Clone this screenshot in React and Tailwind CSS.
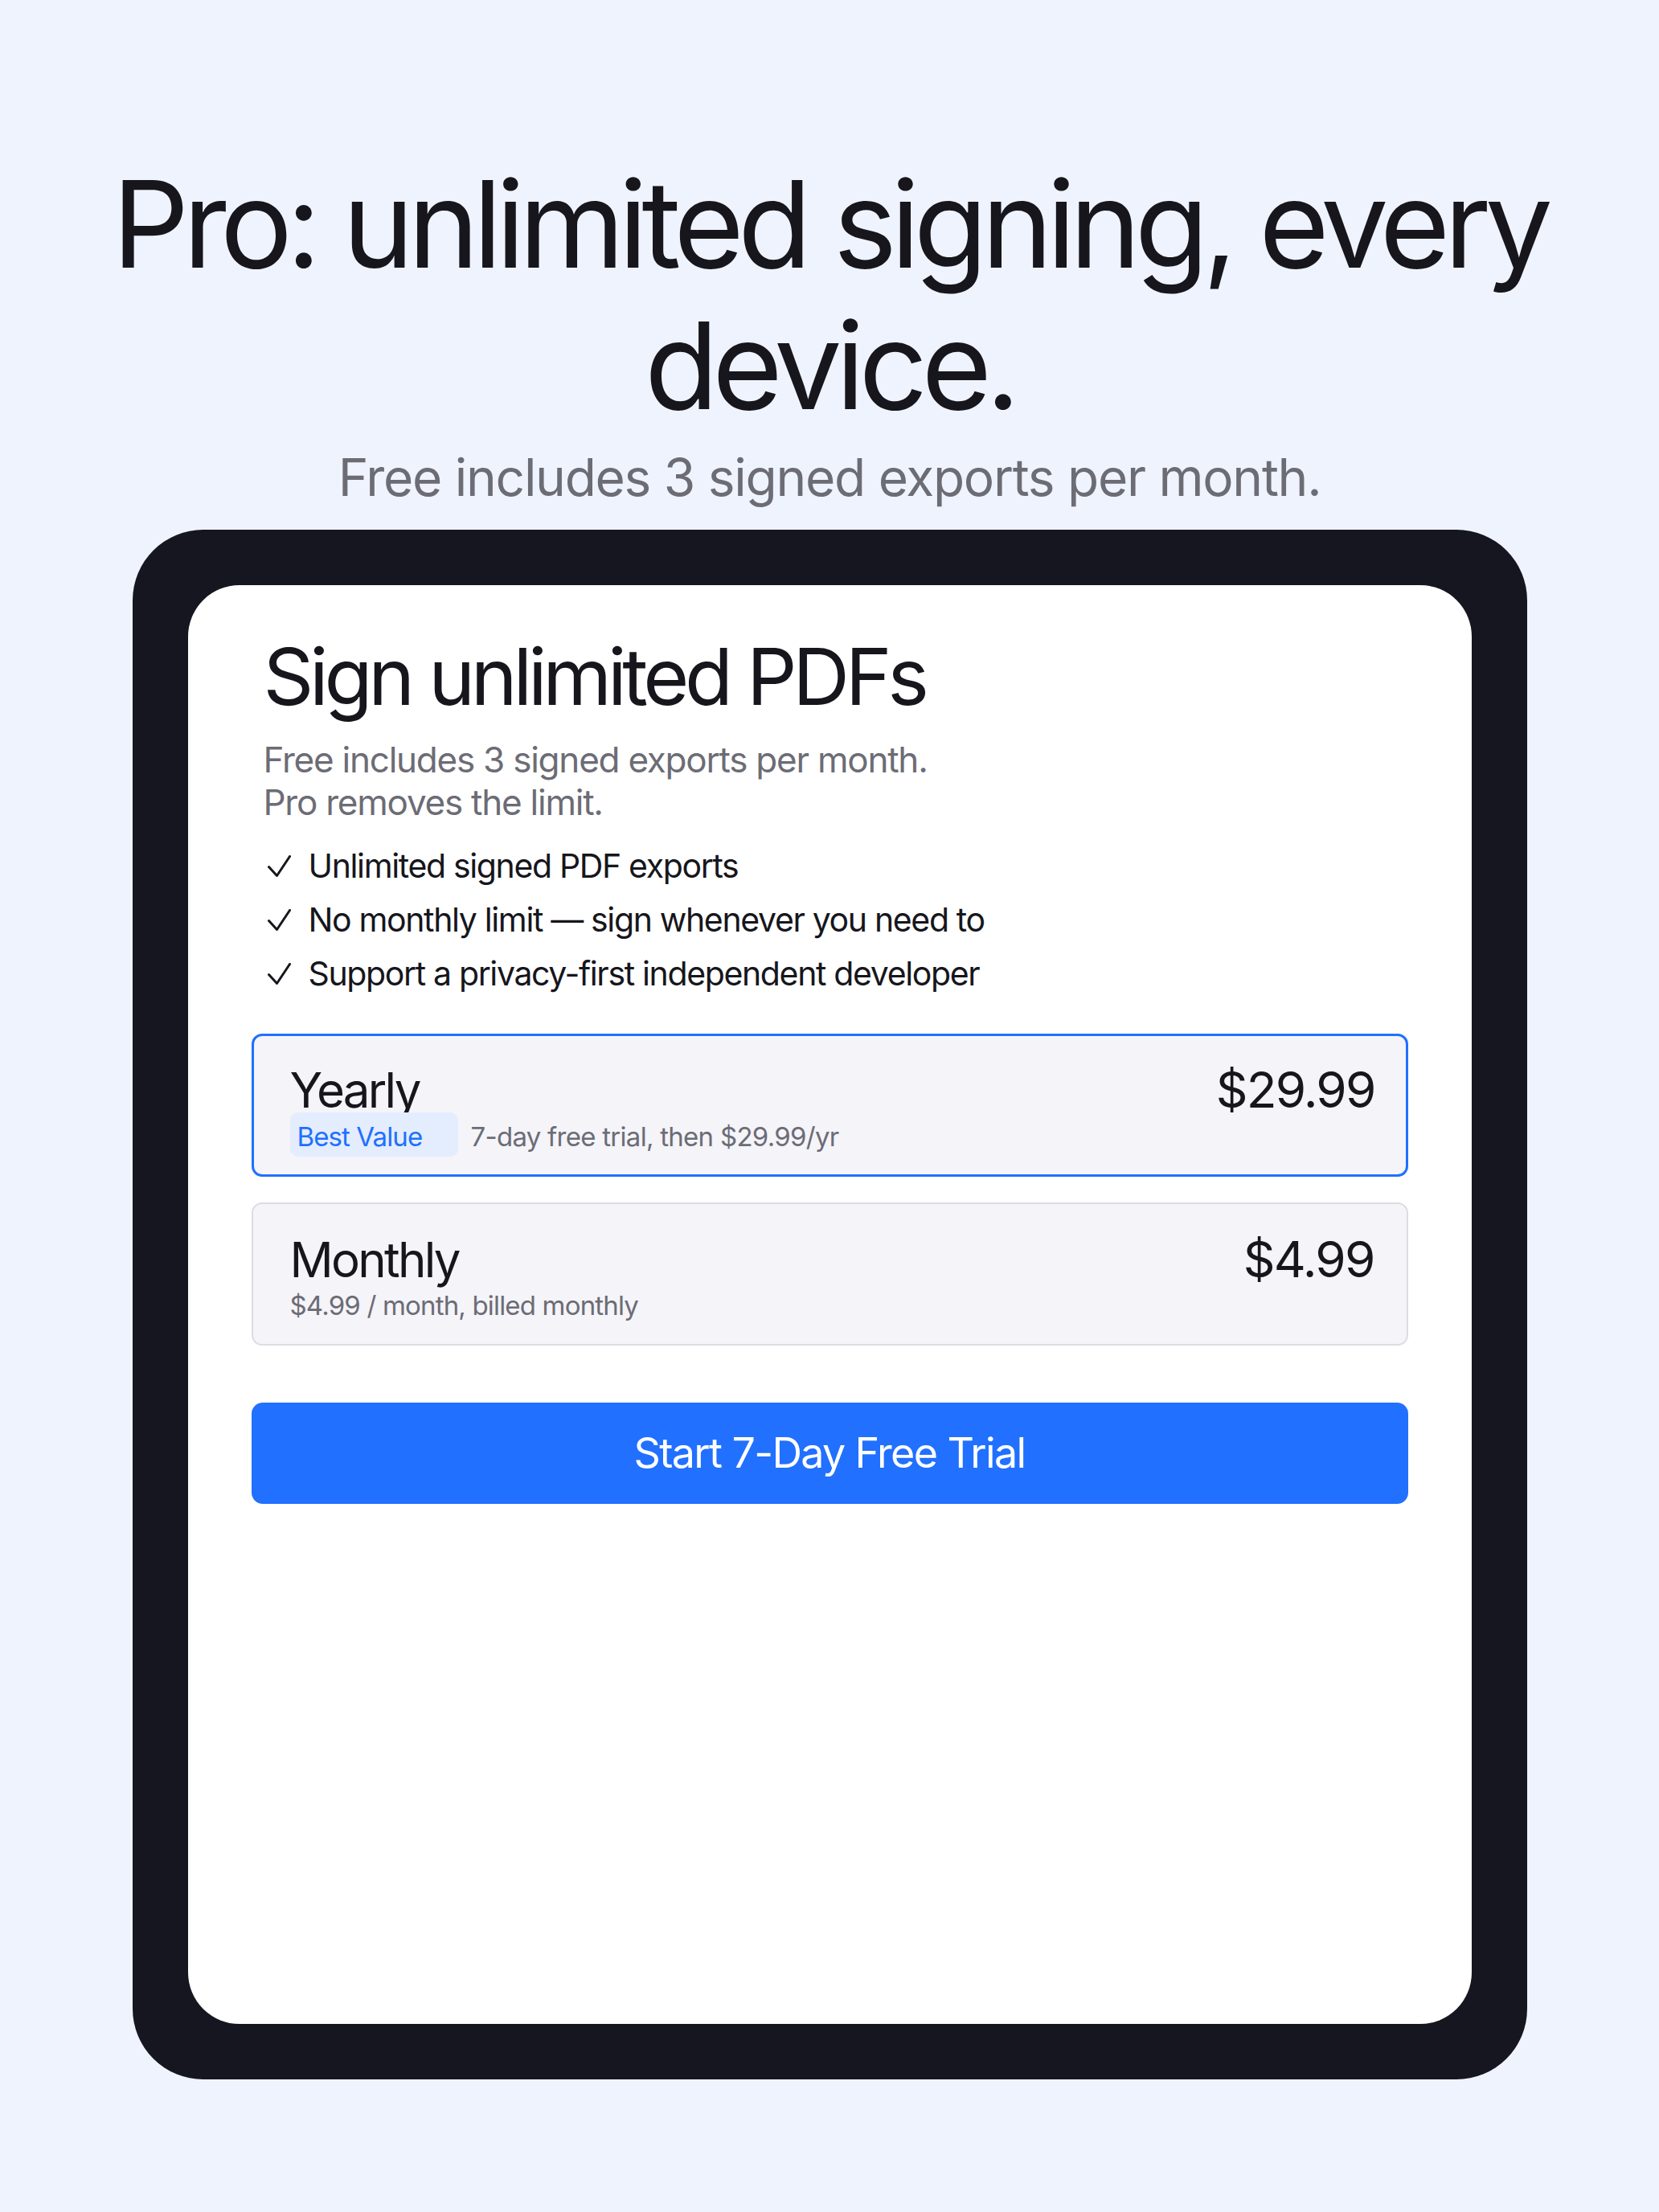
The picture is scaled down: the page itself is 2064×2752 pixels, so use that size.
import React from "react";

const FONT = { fontFamily: 'Inter, "Noto Sans", "Liberation Sans", sans-serif' };

const features = [
  "Unlimited signed PDF exports",
  "No monthly limit — sign whenever you need to",
  "Support a privacy-first independent developer",
];

function Check() {
  return (
    <svg viewBox="0 0 29 27" className="ml-[5px] h-[27px] w-[29px] shrink-0" fill="none">
      <path d="M1.5 14.5 L11.5 25.5 L27.5 1.5" stroke="#16161c" strokeWidth="3" strokeLinecap="round" strokeLinejoin="round" />
    </svg>
  );
}

function PlanCard({ name, price, selected, children }) {
  return (
    <div
      className={
        selected
          ? "flex h-[178px] flex-col rounded-[13px] border-[3px] border-[#2170ff] bg-[#f4f4f9] pl-[45px] pr-[38px] pt-[39px]"
          : "flex h-[178px] flex-col rounded-[13px] border-2 border-[#dcdce3] bg-[#f4f4f9] pl-[46px] pr-[40px] pt-[41px]"
      }
    >
      <div className="flex items-start justify-between">
        <span className="text-[60px] leading-[56px] tracking-[-0.045em] text-[#16161c]">{name}</span>
        <span className="text-[62px] leading-[56px] tracking-[-0.03em] text-[#16161c]">{price}</span>
      </div>
      {children}
    </div>
  );
}

export default function App() {
  return (
    <div className="min-h-screen bg-[#eff3fd] pb-[164px] pt-[191px]" style={FONT}>
      <h1 className="px-[80px] text-center text-[150px] font-normal leading-[176px] tracking-[-0.051em] text-[#16161c]">
        Pro: unlimited signing, every device.
      </h1>
      <p className="mt-[12px] text-center text-[64px] leading-[77px] tracking-[-0.02em] text-[#6c6c75]">
        Free includes 3 signed exports per month.
      </p>

      <div className="mx-auto mt-[27px] h-[1928px] w-[1735px] rounded-[88px] bg-[#15161f] p-[69px]">
        <div className="flex h-full flex-col rounded-[64px] bg-white px-[79px] pt-[55px]">
          <div className="pl-[15px]">
            <h2 className="text-[98px] font-normal leading-[118px] tracking-[-0.054em] text-[#16161c]">
              Sign unlimited PDFs
            </h2>
            <p className="mt-[18px] text-[44px] leading-[53px] tracking-[-0.028em] text-[#6c6c75]">
              Free includes 3 signed exports per month.
              <br />
              Pro removes the limit.
            </p>
            <ul className="mt-[19px]">
              {features.map((f) => (
                <li key={f} className="flex h-[67px] items-center gap-[22px] text-[41px] tracking-[-0.033em] text-[#16161c]">
                  <Check />
                  <span>{f}</span>
                </li>
              ))}
            </ul>
          </div>

          <div className="mt-[41px] flex flex-col gap-[32px]">
            <PlanCard name="Yearly" price="$29.99" selected>
              <div className="flex items-center gap-[16px]">
                <span className="flex h-[55px] w-[209px] items-center rounded-[10px] bg-[#e4edfd] pl-[9px] pt-[6px] text-[33px] tracking-[-0.027em] text-[#2170ff]">
                  Best Value
                </span>
                <span className="pt-[6px] text-[33px] tracking-[-0.022em] text-[#6c6c75]">7-day free trial, then $29.99/yr</span>
              </div>
            </PlanCard>
            <PlanCard name="Monthly" price="$4.99">
              <span className="mt-[9px] text-[33px] leading-[40px] tracking-[-0.025em] text-[#6c6c75]">
                $4.99 / month, billed monthly
              </span>
            </PlanCard>
          </div>

          <button className="mt-[71px] h-[126px] w-full rounded-[14px] bg-[#2170ff] text-[52px] tracking-[-0.032em] text-white">
            Start 7-Day Free Trial
          </button>
        </div>
      </div>
    </div>
  );
}
